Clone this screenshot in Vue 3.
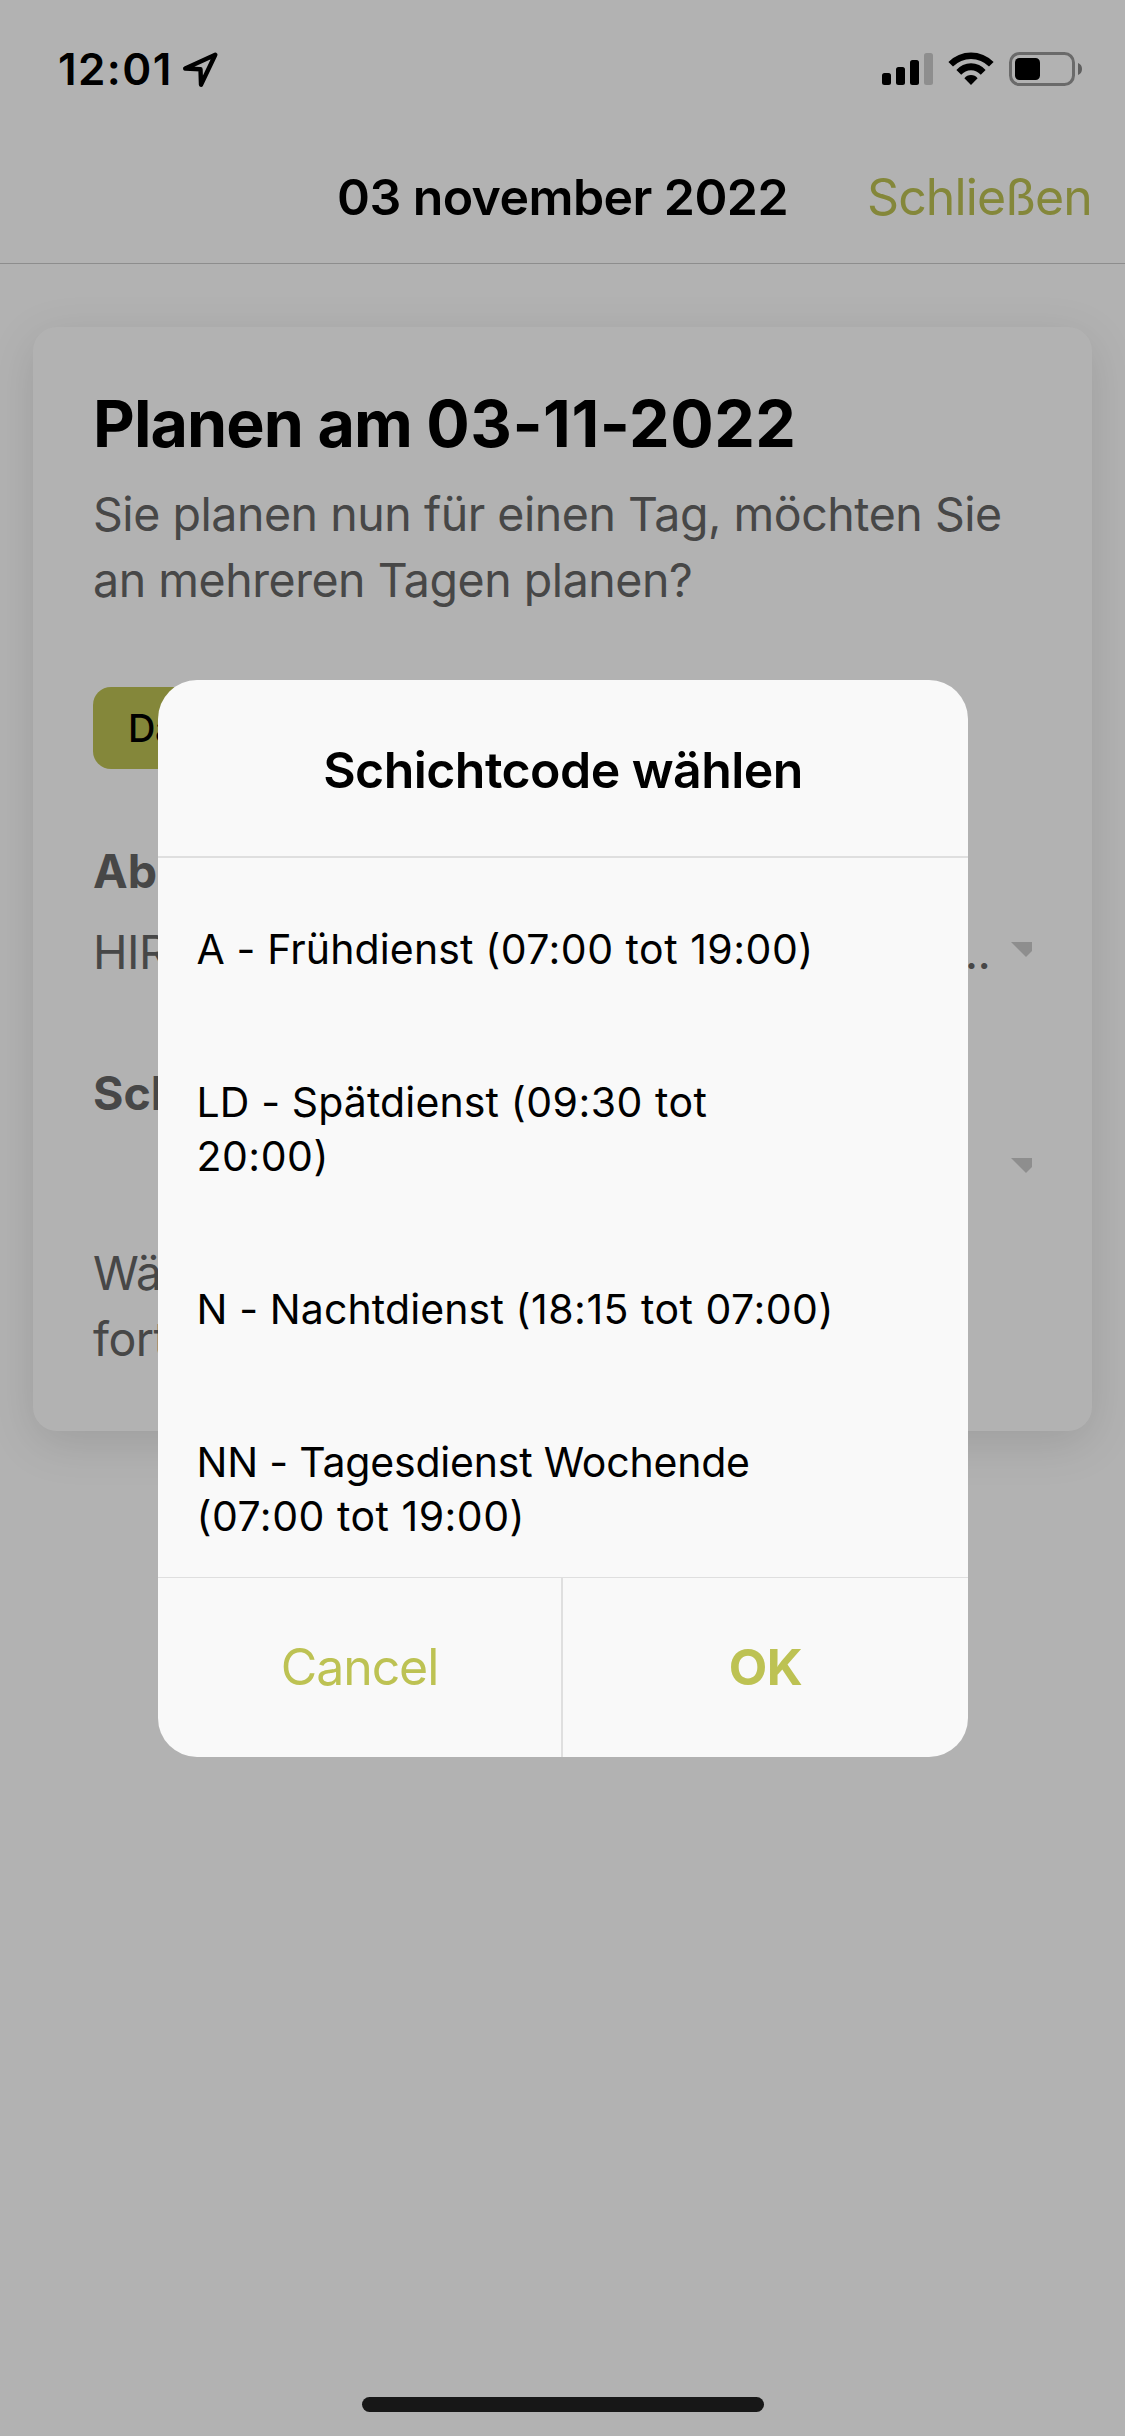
<template>
  <div class="screen">
    <div class="page">
      <div class="status-bar">
        <span class="time">12:01</span>
        <svg class="location" width="37" height="37" viewBox="0 0 37 37">
          <path d="M33.3 2.7 L3.2 16.5 L18.5 17.3 L19 32.8 Z" />
        </svg>
        <div class="status-icons">
          <svg width="51" height="34" viewBox="0 0 51 34">
            <rect
              v-for="bar in signalBars"
              :key="bar.x"
              :x="bar.x"
              :y="33 - bar.height"
              width="9"
              :height="bar.height"
              rx="2.5"
              :fill="bar.active ? '#000' : '#cccccc'"
            />
          </svg>
          <svg class="wifi" width="46" height="34" viewBox="0 0 46 34">
            <path d="M0.4 9.9 A32 32 0 0 1 45.6 9.9 L41 14.6 A25.4 25.4 0 0 0 5 14.6 Z" />
            <path d="M8.4 18 A19 19 0 0 1 37.6 18 L32.8 22.8 A12.8 12.8 0 0 0 13.2 22.8 Z" />
            <path d="M16.4 26.2 A8.6 8.6 0 0 1 29.6 26.2 L23 33 Z" />
          </svg>
          <svg class="battery" width="74" height="34" viewBox="0 0 74 34">
            <rect x="1.5" y="1.5" width="63" height="31" rx="9" fill="none" stroke="#999" stroke-width="3" />
            <rect x="6" y="6" width="25" height="22" rx="4.5" />
            <path d="M69 11 Q73 12.5 73 17 Q73 21.5 69 23 Z" fill="#888" />
          </svg>
        </div>
      </div>

      <header class="toolbar">
        <h1 class="toolbar-title">03 november 2022</h1>
        <a class="close">Schließen</a>
      </header>

      <main class="card">
        <h2 class="card-title">Planen am <span class="date">03-11-2022</span></h2>
        <p class="text intro">Sie planen nun für einen Tag, möchten Sie<br>an mehreren Tagen planen?</p>
        <button class="date-button">Da</button>

        <div class="label">Ab</div>
        <div class="select">
          <span class="text">HIR</span>
          <span class="dots">..</span>
          <svg width="21" height="15" viewBox="0 0 21 15"><path d="M0 0 H30 L15 15 Z" /></svg>
        </div>

        <div class="label second">Sch</div>
        <div class="select empty">
          <svg width="21" height="15" viewBox="0 0 21 15"><path d="M0 0 H30 L15 15 Z" /></svg>
        </div>

        <p class="text hint">Wä<br>fort</p>
      </main>
    </div>

    <div class="backdrop">
      <div class="alert">
        <div class="alert-head">
          <h2 class="alert-title">{{ alert.title }}</h2>
        </div>
        <ul class="options">
          <li v-for="option in alert.options" :key="option.code" :class="{ long: option.long }">{{ option.name }}<span class="hours">{{ option.hours }}</span></li>
        </ul>
        <div class="alert-buttons">
          <button class="cancel">Cancel</button>
          <button class="ok">OK</button>
        </div>
      </div>
    </div>

    <div class="home-indicator"></div>
  </div>
</template>

<script setup>
const signalBars = [
  { x: 0, height: 12, active: true },
  { x: 14, height: 18, active: true },
  { x: 28, height: 25, active: true },
  { x: 42, height: 32, active: false }
]

const alert = {
  title: 'Schichtcode wählen',
  options: [
    { code: 'A', name: 'A - Frühdienst ', hours: '(07:00 tot 19:00)' },
    { code: 'LD', name: 'LD - Spätdienst ', hours: '(09:30 tot\n20:00)' },
    { code: 'N', name: 'N - Nachtdienst ', hours: '(18:15 tot 07:00)' },
    { code: 'NN', name: 'NN - Tagesdienst Wochende\n', hours: '(07:00 tot 19:00)', long: true }
  ]
}
</script>

<style>
body {
  margin: 0;
}
</style>

<style scoped>
.screen {
  position: relative;
  width: 1125px;
  height: 2436px;
  overflow: hidden;
  background: #fff;
  color: #000;
  font-family: Inter, "Liberation Sans", sans-serif;
}

h1,
h2,
p,
ul {
  margin: 0;
  padding: 0;
}

button {
  box-sizing: border-box;
  border: 0;
  padding: 0;
  background: none;
  font-family: inherit;
}

svg {
  display: block;
}

.status-bar {
  display: flex;
  align-items: flex-start;
  height: 80px;
  padding: 52px 42px 0 58px;
}

.time {
  width: 124px;
  font-size: 44px;
  font-weight: 600;
  letter-spacing: 1.4px;
  line-height: 34px;
  white-space: nowrap;
}

.location path {
  fill: none;
  stroke: #000;
  stroke-width: 4.4;
  stroke-linejoin: round;
}

.status-icons {
  display: flex;
  margin-left: auto;
}

.wifi {
  margin-left: 15px;
}

.battery {
  margin-left: 15px;
}

.toolbar {
  display: grid;
  grid-template-columns: 1fr auto 1fr;
  align-items: center;
  box-sizing: border-box;
  height: 132px;
  border-bottom: 1px solid #cbcbcb;
  padding: 0 33px 2px;
}

.toolbar-title {
  grid-column: 2;
  font-size: 50px;
  font-weight: 600;
  letter-spacing: -0.57px;
  line-height: 66px;
}

.close {
  justify-self: end;
  color: #bdc253;
  font-size: 50px;
  letter-spacing: -0.9px;
  line-height: 66px;
}

.card {
  margin: 63px 33px 0;
  padding: 57px 60px 59px;
  border-radius: 24px;
  background: #fff;
  box-shadow: 0 12px 48px rgba(0, 0, 0, 0.12);
}

.card-title {
  font-size: 64.5px;
  font-weight: 700;
  letter-spacing: -0.9px;
  line-height: 80px;
  white-space: nowrap;
}

.card-title .date {
  letter-spacing: 0.5px;
}

.text {
  color: #666;
  font-size: 46.5px;
  letter-spacing: -0.46px;
  line-height: 66px;
  white-space: nowrap;
}

.intro {
  margin-top: 17px;
}

.date-button {
  display: block;
  width: 320px;
  height: 82px;
  margin-top: 74px;
  padding: 0 35px;
  border-radius: 18px;
  background: #bdc253;
  color: #000;
  font-size: 38px;
  font-weight: 500;
  letter-spacing: -0.5px;
  text-align: left;
}

.label {
  margin-top: 69px;
  color: #666;
  font-size: 46.5px;
  font-weight: 700;
  line-height: 66px;
}

.label.second {
  margin-top: 75px;
}

.select {
  display: flex;
  align-items: center;
  margin-top: 15px;
}

.select svg {
  margin: 0 0 5px 21px;
  fill: #cccccc;
}

.select.empty {
  justify-content: flex-end;
  height: 54px;
}

.dots {
  margin-left: auto;
  color: #666;
  font-size: 46.5px;
  letter-spacing: -0.8px;
  line-height: 66px;
}

.hint {
  margin-top: 45px;
}

.backdrop {
  position: absolute;
  inset: 0;
  display: flex;
  align-items: center;
  justify-content: center;
  background: rgba(0, 0, 0, 0.3);
}

.alert {
  display: flex;
  flex-direction: column;
  width: 810px;
  height: 1077px;
  margin-left: 1px;
  overflow: hidden;
  border-radius: 39px;
  background: #f9f9f9;
}

.alert-head {
  display: flex;
  align-items: center;
  justify-content: center;
  height: 172px;
  padding-top: 4px;
  border-bottom: 2px solid #dfdfdf;
}

.alert-title {
  font-size: 50px;
  font-weight: 600;
  letter-spacing: -0.55px;
  line-height: 60px;
}

.options {
  flex: 1;
  min-height: 0;
  overflow: hidden;
  padding: 15px 38.5px 0;
  list-style: none;
}

.options li {
  padding: 49.5px 0;
  font-size: 41px;
  letter-spacing: 0.12px;
  line-height: 54px;
  white-space: pre;
}

.options li.long {
  letter-spacing: -0.2px;
}

.options .hours {
  letter-spacing: 0.5px;
}

.alert-buttons {
  display: flex;
  height: 179px;
  border-top: 1px solid #dfdfdf;
}

.alert-buttons button {
  width: 405px;
  color: #bdc253;
  font-size: 50px;
}

.alert-buttons .cancel {
  border-right: 2px solid #dfdfdf;
  letter-spacing: -1.1px;
}

.alert-buttons .ok {
  font-weight: 700;
  letter-spacing: -0.5px;
}

/* sits above the dimmed page */
.home-indicator {
  position: absolute;
  bottom: 24px;
  left: 362px;
  width: 402px;
  height: 15px;
  border-radius: 8px;
  background: #171717;
}
</style>
